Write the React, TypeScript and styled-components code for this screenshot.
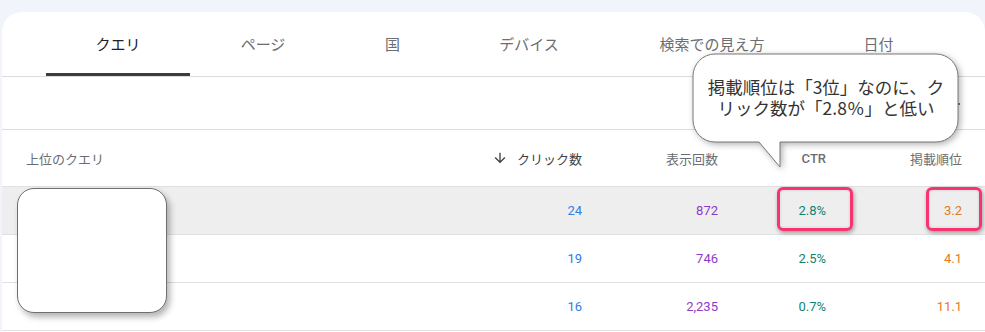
import React from 'react';
import styled, { createGlobalStyle } from 'styled-components';

const Global = createGlobalStyle`
  html, body { margin: 0; padding: 0; background: #f1f4fb; }
  body { font-family: Roboto, "Noto Sans CJK JP", sans-serif; overflow: hidden; }
`;

const Page = styled.div`
  position: relative;
  height: 332px;
  padding: 12px 0 0 2px;
  box-sizing: border-box;
  overflow: hidden;
`;

const Card = styled.div`
  background: #fff;
  border-radius: 20px 20px 0 0;
  height: 400px;
`;

const TabBar = styled.div`
  display: flex;
  height: 65px;
  box-sizing: border-box;
  padding-left: 44px;
  border-bottom: 1px solid #dadce0;
`;

const Tab = styled.div<{ $w: number; $active?: boolean }>`
  width: ${p => p.$w}px;
  display: flex;
  align-items: center;
  justify-content: center;
  box-sizing: border-box;
  padding-top: 2px;
  border-bottom: 3px solid ${p => (p.$active ? '#3c3c3c' : 'transparent')};
  font-size: 15px;
  color: ${p => (p.$active ? '#202124' : '#6b6e72')};
`;

const Toolbar = styled.div`
  height: 53px;
  box-sizing: border-box;
  border-bottom: 1px solid #dadce0;
  display: flex;
  align-items: center;
  justify-content: flex-end;
  padding-right: 23px;
`;

const ToolIcon = styled.svg`
  width: 16px;
  height: 16px;
  margin-top: 2px;
`;

const Row = styled.div<{ $h: number; $hl?: boolean }>`
  display: grid;
  grid-template-columns: 1fr 142px 136px 108px 136px;
  align-items: center;
  height: ${p => p.$h}px;
  box-sizing: border-box;
  padding: 0 23px 0 24px;
  border-bottom: 1px solid #e0e0e0;
  background: ${p => (p.$hl ? '#eeeeee' : '#fff')};
`;

const HeadCell = styled.div<{ $left?: boolean; $sorted?: boolean; $bold?: boolean }>`
  font-size: 13px;
  color: ${p => (p.$sorted ? '#3c4043' : '#6b6e72')};
  font-weight: ${p => (p.$bold ? 500 : 400)};
  text-align: ${p => (p.$left ? 'left' : 'right')};
  display: flex;
  align-items: center;
  justify-content: ${p => (p.$left ? 'flex-start' : 'flex-end')};
  gap: 9px;
`;

const Cell = styled.div<{ $color: string }>`
  font-size: 13px;
  color: ${p => p.$color};
  text-align: right;
`;

const Redact = styled.div`
  position: absolute;
  left: 17px;
  top: 188px;
  width: 150px;
  height: 125px;
  box-sizing: border-box;
  background: #fff;
  border: 1px solid #6f6f6f;
  border-radius: 17px;
  box-shadow: 3px 4px 6px rgba(0, 0, 0, 0.3);
`;

const Mark = styled.div<{ $x: number; $w: number }>`
  position: absolute;
  left: ${p => p.$x}px;
  top: 187px;
  width: ${p => p.$w}px;
  height: 44px;
  box-sizing: border-box;
  border: 3px solid #f7346f;
  border-radius: 6px;
  box-shadow: 1px 2px 4px rgba(0, 0, 0, 0.35), inset 0 0 3px rgba(0, 0, 0, 0.15);
`;

const Callout = styled.div`
  position: absolute;
  left: 692px;
  top: 53px;
  width: 268px;
  height: 116px;
`;

const CalloutShape = styled.svg`
  position: absolute;
  left: 0;
  top: 0;
  overflow: visible;
  filter: drop-shadow(2px 2px 3px rgba(0, 0, 0, 0.3));
`;

const CalloutText = styled.div`
  position: relative;
  height: 89px;
  display: flex;
  align-items: center;
  justify-content: center;
  text-align: center;
  font-family: "Noto Sans CJK JP", sans-serif;
  font-size: 17.5px;
  line-height: 21px;
  color: #333;
  padding-bottom: 2px;
  box-sizing: border-box;
`;

const tabs: [string, number][] = [
  ['クエリ', 144],
  ['ページ', 146],
  ['国', 113],
  ['デバイス', 160],
  ['検索での見え方', 206],
  ['日付', 127],
];

const rows = [
  { c: '24', i: '872', ctr: '2.8%', p: '3.2', hl: true },
  { c: '19', i: '746', ctr: '2.5%', p: '4.1' },
  { c: '16', i: '2,235', ctr: '0.7%', p: '11.1' },
];

const BLUE = '#2f7de1';
const PURPLE = '#8e3ac9';
const TEAL = '#118374';
const ORANGE = '#e3791d';

export default function App() {
  return (
    <>
      <Global />
      <Page>
        <Card>
          <TabBar>
            {tabs.map(([t, w], k) => (
              <Tab key={t} $w={w} $active={k === 0}>
                {t}
              </Tab>
            ))}
          </TabBar>
          <Toolbar>
            <ToolIcon viewBox="0 0 24 24">
              <path d="M3 12h18M7 6h10M10 18h4" stroke="#444" strokeWidth="2.5" fill="none" />
            </ToolIcon>
          </Toolbar>
          <Row $h={57}>
            <HeadCell $left>上位のクエリ</HeadCell>
            <HeadCell $sorted>
              <svg width="16" height="16" viewBox="0 0 24 24">
                <path d="M20 12l-1.41-1.41L13 16.17V4h-2v12.17l-5.58-5.59L4 12l8 8 8-8z" fill="#3c4043" />
              </svg>
              クリック数
            </HeadCell>
            <HeadCell>表示回数</HeadCell>
            <HeadCell $bold>CTR</HeadCell>
            <HeadCell>掲載順位</HeadCell>
          </Row>
          {rows.map((r, k) => (
            <Row key={k} $h={48} $hl={r.hl}>
              <div />
              <Cell $color={BLUE}>{r.c}</Cell>
              <Cell $color={PURPLE}>{r.i}</Cell>
              <Cell $color={TEAL}>{r.ctr}</Cell>
              <Cell $color={ORANGE}>{r.p}</Cell>
            </Row>
          ))}
        </Card>
        <Redact />
        <Mark $x={777} $w={76} />
        <Mark $x={926} $w={56} />
        <Callout>
          <CalloutShape width="268" height="116" viewBox="0 0 268 116">
            <path
              d="M23,1 H244 A22,22 0 0 1 266,23 V67 A22,22 0 0 1 244,89 H88 V114 L67,89 H23 A22,22 0 0 1 1,67 V23 A22,22 0 0 1 23,1 Z"
              fill="#fff"
              stroke="#777"
              strokeWidth="1"
            />
          </CalloutShape>
          <CalloutText>
            掲載順位は「3位」なのに、ク
            <br />
            リック数が「2.8％」と低い
          </CalloutText>
        </Callout>
      </Page>
    </>
  );
}
